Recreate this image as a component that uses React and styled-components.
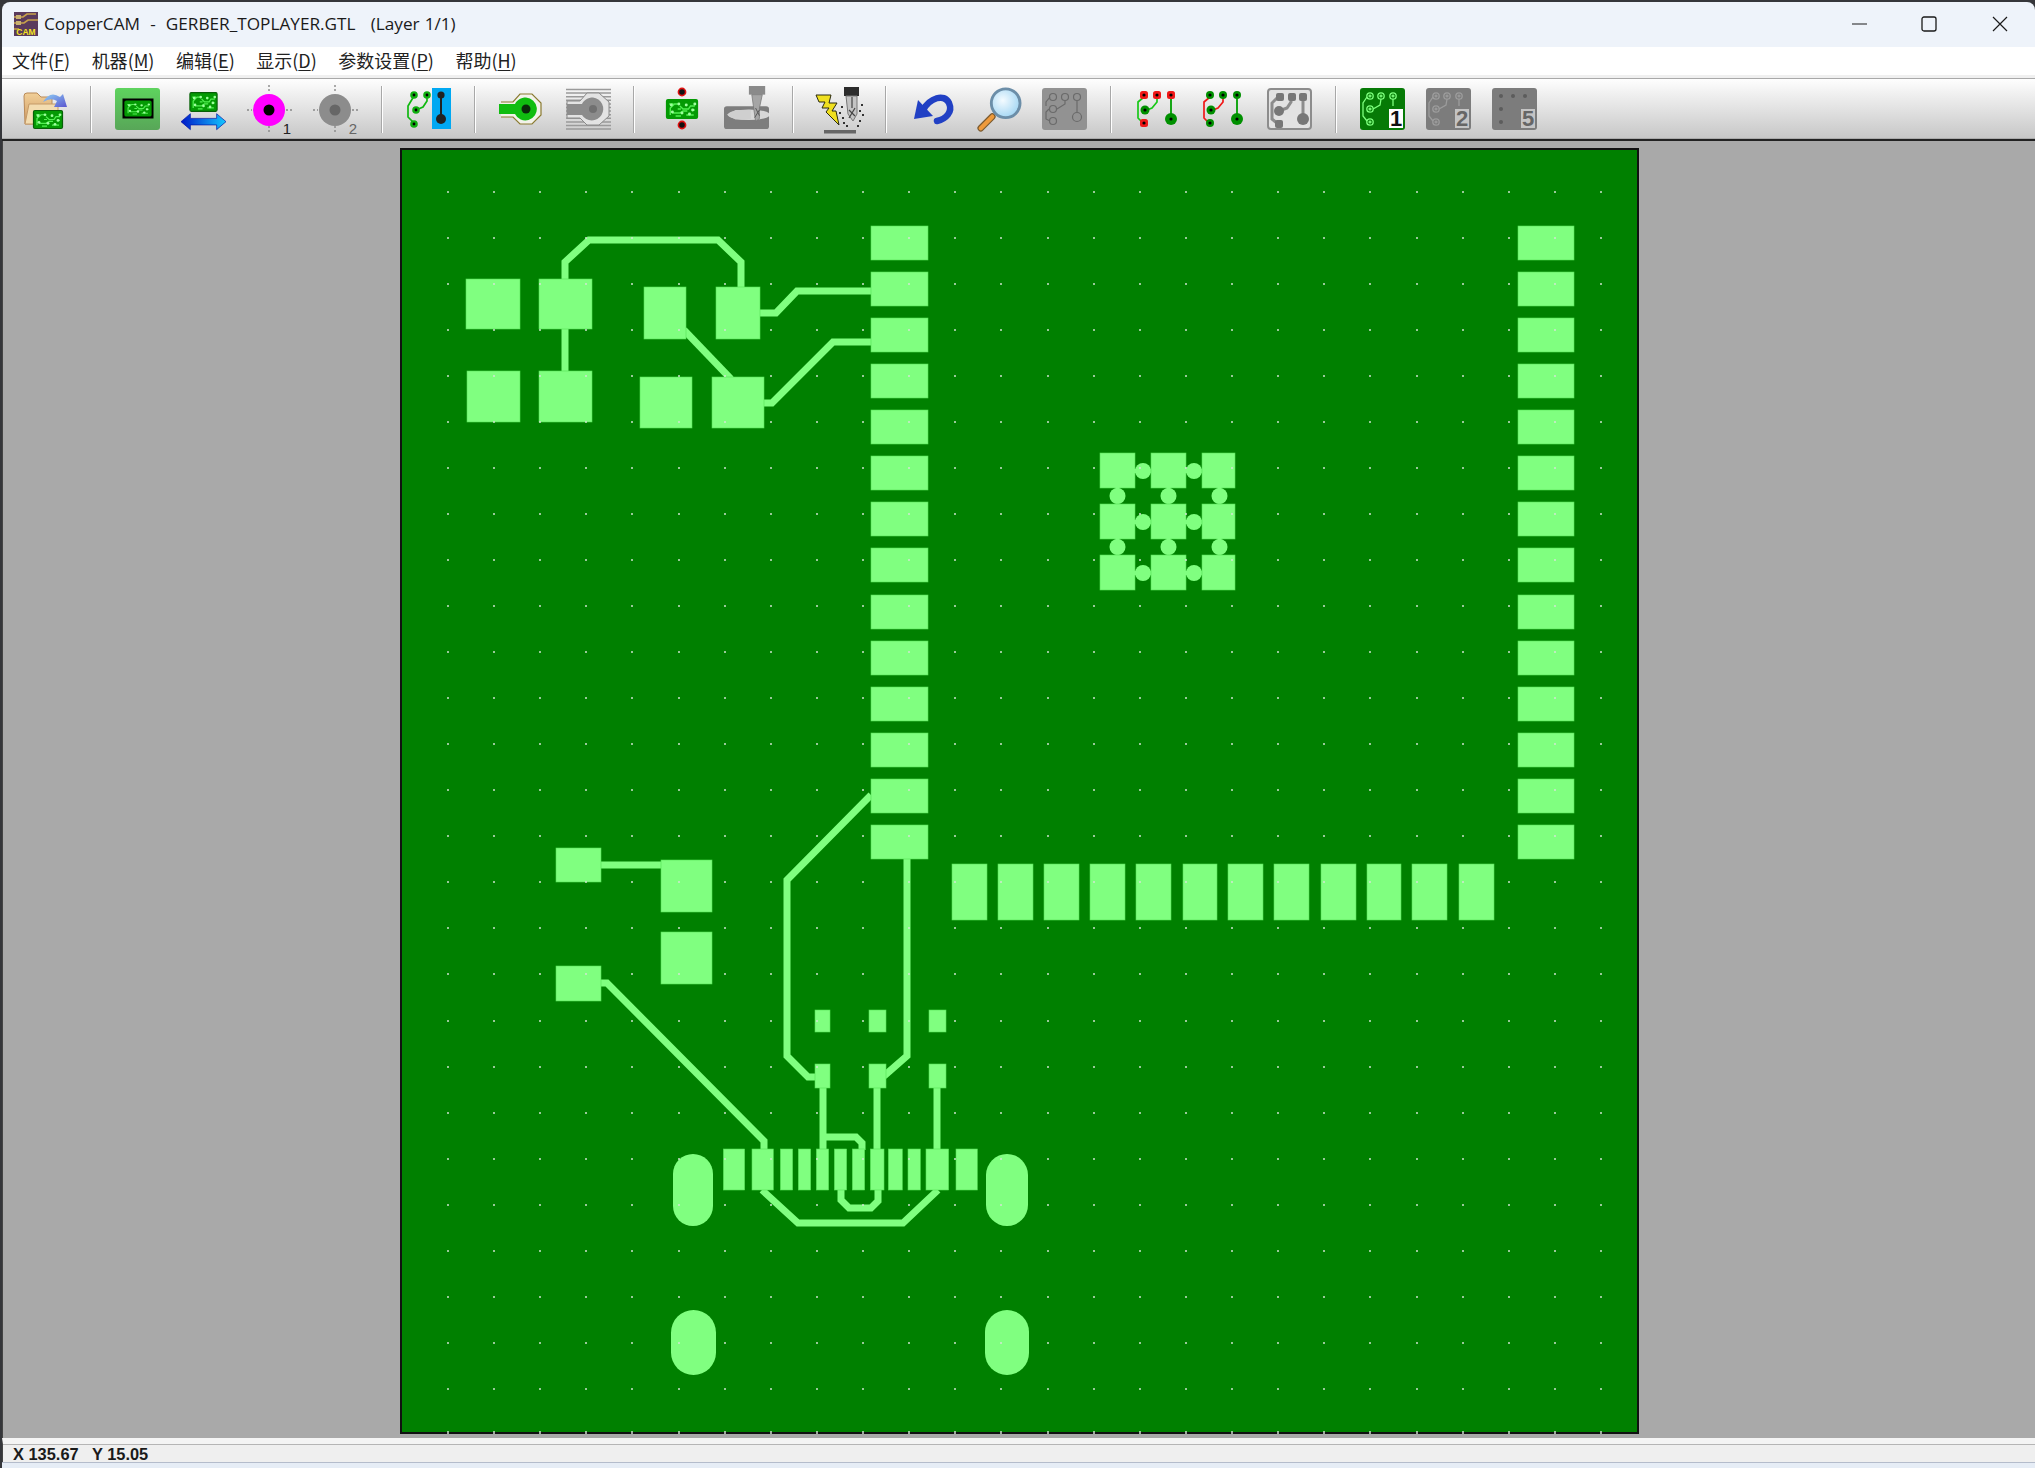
import React from 'react';
import styled, { createGlobalStyle } from 'styled-components';

const GlobalStyle = createGlobalStyle`
    html, body, #root {
        margin: 0;
        height: 100%;
        overflow: hidden;
        background: #35363a;
    }
`;

const Window = styled.div`
    height: 100%;
    box-sizing: border-box;
    padding: 2px 0 0 2px;
    display: flex;
    flex-direction: column;
`;
const TitleBar = styled.div`
    flex: 0 0 45px;
    box-sizing: border-box;
    display: flex;
    align-items: center;
    background: #eef3fa;
    border-radius: 8px 8px 0 0;
    padding: 0 0 2px 12px;
    font-family: "Open Sans", sans-serif;
    font-size: 17.2px;
    word-spacing: 0.6px;
    color: #1a1a1a;
`;
const TitleText = styled.span`
    margin-left: 6px;
    white-space: pre;
    flex: 1;
`;
const WinButton = styled.div`
    width: 24px;
    height: 24px;
    margin-right: ${(p) => p.$gap}px;
    display: flex;
    align-items: center;
    justify-content: center;
`;
const MenuBar = styled.div`
    flex: 0 0 31px;
    box-sizing: border-box;
    display: flex;
    gap: 21.5px;
    align-items: center;
    padding: 0 0 3px 10px;
    background: #fff;
    border-bottom: 3px solid #f0f0f0;
    font-family: "Noto Sans CJK SC", sans-serif;
    font-size: 18px;
    line-height: 22px;
    color: #222;
`;
const MenuItem = styled.span`
    white-space: nowrap;
    u { text-underline-offset: 2px; }
`;
const Toolbar = styled.div`
    flex: 0 0 63px;
    box-sizing: border-box;
    display: flex;
    align-items: center;
    padding-left: 20px;
    background: linear-gradient(#fefefe, #c6c6c6);
    border-top: 1px solid #a9a9a9;
    border-bottom: 2px solid #222;
    box-shadow: inset 0 -1px 0 #aaa;
`;
const ToolGroup = styled.div`
    display: flex;
    gap: 21px;
`;
const ToolSep = styled.div`
    width: 1px;
    height: 47px;
    margin: 0 23px;
    background: #a8a8a8;
    border-right: 1px solid #fff;
`;
const ToolSvg = styled.svg`
    display: block;
    width: 45px;
    height: 42px;
    overflow: visible;
`;
const Canvas = styled.div`
    flex: 1;
    min-height: 0;
    display: flex;
    justify-content: center;
    align-items: flex-start;
    padding-top: 7px;
    background: #a9a9a9;
    border-left: 1px solid #444;
`;
const BoardSvg = styled.svg`
    display: block;
    width: 1239px;
    height: 1286px;
`;
const StatusBar = styled.div`
    flex: 0 0 24px;
    box-sizing: border-box;
    display: flex;
    align-items: flex-end;
    padding-left: 10px;
    background: #efefef;
    border-top: 6px solid #f4f4f4;
    border-left: 1px solid #444;
    box-shadow: inset 0 1px 0 #b5b5b5;
    font-family: "Liberation Sans", sans-serif;
    font-weight: 700;
    font-size: 16.4px;
    line-height: 16px;
    color: #1a1a1a;
    white-space: pre;
`;
const BottomEdge = styled.div`
    flex: 0 0 6px;
    background: #e6edf6;
    border-top: 1px solid #b4bccb;
    box-sizing: border-box;
`;

/* ---------- toolbar icons ---------- */

const PcbArt = ({ x, y, w, h, border = '#075f07' }) => {
    const sx = w / 30;
    const sy = h / 20;
    return (
        <g transform={`translate(${x} ${y}) scale(${sx} ${sy})`}>
            <rect x="0.5" y="0.5" width="29" height="19" rx="1.5" fill="#049a04" stroke={border} strokeWidth="1.2" />
            <path d="M4 16 V9 L8 5 H11 M3 5 H7 M13 7 L16 10 H21 L23 7 H27 M6 14 H13 L16 12 H20 M19 16 H26 M11 10 H14 M24 11 H27 M9 17 H14" fill="none" stroke="#52f052" strokeWidth="1.3" />
            {[[12, 5], [19, 6], [25, 11], [6, 13], [22, 15], [15, 14], [5, 6], [27, 5]].map(([cx, cy]) => (
                <circle key={cx + '' + cy} cx={cx} cy={cy} r="1.4" fill="#9dff9d" />
            ))}
        </g>
    );
};

const OpenIcon = () => (
    <ToolSvg viewBox="0 0 45 42">
        <defs>
            <linearGradient id="folderG" x1="0" y1="0" x2="0" y2="1">
                <stop offset="0" stopColor="#f1cf98" />
                <stop offset="1" stopColor="#cf9a62" />
            </linearGradient>
            <linearGradient id="openArrow" x1="0" y1="0" x2="1" y2="1">
                <stop offset="0" stopColor="#8fd0f5" />
                <stop offset="1" stopColor="#5a56d0" />
            </linearGradient>
        </defs>
        <path d="M2 8 Q2 5 5 5 H15 L19 9 H30 V36 H3 Z" fill="url(#folderG)" stroke="#b98a58" />
        <path d="M7 16 H36 V36 H3 Z" fill="#f3dcb0" stroke="#c59a68" />
        <path d="M21 14 Q28 2 38 9 L41 6 L45 19 L32 19 L35 13 Q29 9 21 14 Z" fill="url(#openArrow)" />
        <PcbArt x={11} y={22} w={30} h={19} />
    </ToolSvg>
);

const ActiveBoardIcon = () => (
    <ToolSvg viewBox="0 0 45 42">
        <defs>
            <linearGradient id="activeG" x1="0" y1="0" x2="0" y2="1">
                <stop offset="0" stopColor="#5ed35e" />
                <stop offset="1" stopColor="#58a658" />
            </linearGradient>
        </defs>
        <rect x="0" y="0" width="45" height="42" rx="3" fill="url(#activeG)" />
        <rect x="7.5" y="10.5" width="31" height="20" fill="#000" />
        <PcbArt x={9.5} y={12.5} w={27} h={16} border="#049a04" />
    </ToolSvg>
);

const MirrorIcon = () => (
    <ToolSvg viewBox="0 0 48 42">
        <defs>
            <linearGradient id="mirrorG" x1="0" y1="0" x2="1" y2="0">
                <stop offset="0" stopColor="#0018c8" />
                <stop offset="1" stopColor="#14c8ff" />
            </linearGradient>
        </defs>
        <PcbArt x={9} y={3} w={30} h={21} />
        <path d="M0 34.5 L10 26 V31 H38 V26 L48 34.5 L38 43 V38 H10 V43 Z" fill="url(#mirrorG)" stroke="#0010a0" strokeWidth="0.7" />
    </ToolSvg>
);

const DrillDot = ({ fill, hole, label, labelFill }) => (
    <ToolSvg viewBox="0 0 45 42">
        <g stroke="#888" strokeWidth="1.4" strokeDasharray="2 2">
            <path d="M22 -3 V4 M22 38 V44 M0 22 H5 M39 22 H45" />
        </g>
        <circle cx="22" cy="22" r="16" fill={fill} />
        <circle cx="22" cy="22" r="5.5" fill={hole} />
        <text x="40" y="46" fontFamily="Liberation Sans, sans-serif" fontSize="15" fill={labelFill} textAnchor="middle">{label}</text>
    </ToolSvg>
);

const Nets = ({ node = '#00a000', trace = '#16c816', side = '#00a000', ends = null, big = '#00a000', hole = '#000', left = null }) => (
    <g fill="none">
        <path d="M9 9 L3 14 V30 L8 35 M12 22 L17 20 L22 14 V9" stroke={left || trace} strokeWidth="1.7" />
        <path d="M36 9 V30" stroke={side} strokeWidth="1.8" />
        {[[9, 7], [22, 7], [36, 7], [9, 35]].map(([x, y]) => (
            ends
                ? <rect key={x + '' + y} x={x - 4} y={y - 4} width="8" height="8" rx="2.5" fill={ends} />
                : <circle key={x + '' + y} cx={x} cy={y} r="4" fill={node} />
        ))}
        <circle cx="10" cy="22" r="4.5" fill={node} />
        <circle cx="36" cy="31" r="6" fill={big} />
        {[[9, 7], [22, 7], [36, 7], [9, 35], [10, 22], [36, 31]].map(([x, y]) => (
            <circle key={'h' + x + y} cx={x} cy={y} r="1.6" fill={hole} />
        ))}
    </g>
);

const TraceViaIcon = () => (
    <ToolSvg viewBox="0 0 45 42">
        <rect x="26" y="0" width="19" height="41" fill="#00a8f2" />
        <path d="M35 7 V31" stroke="#222" strokeWidth="2" />
        <circle cx="35" cy="7" r="3.6" fill="#222" />
        <circle cx="35" cy="31" r="5" fill="#222" />
        <g fill="none" stroke="#10b810" strokeWidth="1.7">
            <path d="M8 35 L2 29 V18 L8 8 M10 22 L17 19 L21 13 V8" />
        </g>
        {[[8, 7], [21, 7], [10, 22], [8, 36]].map(([x, y]) => (
            <g key={x + '' + y}>
                <circle cx={x} cy={y} r="3.8" fill="#10b010" />
                <circle cx={x} cy={y} r="1.4" fill="#000" />
            </g>
        ))}
    </ToolSvg>
);

const PadIcon = () => (
    <ToolSvg viewBox="0 0 45 42">
        <path d="M2 14 H14 L21 6 H33 L42 15 V27 L33 36 H21 L14 29 H2" fill="#f2f2ea" stroke="#8a7a30" strokeWidth="1.2" />
        <path d="M0 16 H16 C18 12 22 9.5 27 9.5 A11.5 11.5 0 1 1 16 26 H0 Z" fill="#10bd10" />
        <circle cx="27" cy="21" r="4.5" fill="#0a2a0a" />
    </ToolSvg>
);

const HatchIcon = () => (
    <ToolSvg viewBox="0 0 45 42">
        <g stroke="#9a9a9a" strokeWidth="1.5">
            {Array.from({ length: 12 }, (_, i) => (
                <path key={i} d={`M1 ${1.5 + i * 3.6} H46`} />
            ))}
        </g>
        <path d="M2 13 H15 L22 5 H34 L44 14 V28 L34 37 H22 L15 30 H2 Z" fill="#e3e3e3" stroke="#8a8a8a" />
        <path d="M2 16 H17 C19 12 23 9.5 28 9.5 A11.5 11.5 0 1 1 17 27 H2 Z" fill="#8c8c8c" />
        <circle cx="28" cy="21" r="4" fill="#707070" />
    </ToolSvg>
);

const AlignIcon = () => (
    <ToolSvg viewBox="0 0 45 42">
        <PcbArt x={8} y={11} w={32} h={20} border="#049a04" />
        <circle cx="24" cy="4" r="3.6" fill="#111" stroke="#e01010" strokeWidth="1.6" />
        <circle cx="24" cy="37" r="3.6" fill="#111" stroke="#e01010" strokeWidth="1.6" />
    </ToolSvg>
);

const MillIcon = () => (
    <ToolSvg viewBox="0 0 47 42">
        <rect x="0" y="18" width="47" height="24" rx="3" fill="#7d7d7d" />
        <ellipse cx="26" cy="27" rx="22" ry="5.5" fill="#e8e8e8" opacity="0.85" />
        <path d="M3 27 L12 22 H28 V32 H12 Z" fill="#cfcfcf" />
        <rect x="26" y="-3" width="17" height="9" fill="#8a8a8a" />
        <path d="M29 6 H40 L37 20 V31 L33 34 L31 20 Z" fill="#a5a5a5" stroke="#777" strokeWidth="0.8" />
        <path d="M33 20 L37 28 M37 22 L32 30" stroke="#555" strokeWidth="1" />
    </ToolSvg>
);

const SparkIcon = () => (
    <ToolSvg viewBox="0 0 45 42">
        <path d="M-1 7 H14 L12 15 H20 L15 23 H19 L22 37 L9 24 L12 20 H5 L8 14 H2 Z" fill="#f0e020" stroke="#2a2a10" strokeWidth="1" />
        <rect x="27" y="-1" width="15" height="9" fill="#2c2c2c" />
        <path d="M29 8 H40 V26 L36 33 L31 26 Z" fill="#c4c4c4" stroke="#777" strokeWidth="1" />
        <path d="M32 22 L38 28 M38 20 L32 30 M35 9 V20" stroke="#444" strokeWidth="1.2" />
        <rect x="7" y="42" width="32" height="3.5" fill="#666" />
        <g fill="#333">
            {[[24, 18], [22, 24], [25, 29], [26, 34], [44, 16], [42, 22], [45, 26], [42, 32], [40, 37], [29, 37]].map(([x, y]) => (
                <rect key={x + '' + y} x={x} y={y} width="2" height="2" />
            ))}
        </g>
    </ToolSvg>
);

const UndoIcon = () => (
    <ToolSvg viewBox="0 0 45 42">
        <path d="M13 22 C20 10 34 5 39 15 C43 24 36 31 27 33" fill="none" stroke="#2140c4" strokeWidth="6.5" strokeLinecap="round" />
        <path d="M4 31 L8 12 L23 28 Z" fill="#2140c4" />
    </ToolSvg>
);

const ZoomIcon = () => (
    <ToolSvg viewBox="0 0 47 42">
        <defs>
            <radialGradient id="lensG" cx="0.4" cy="0.4" r="0.7">
                <stop offset="0" stopColor="#f4fbff" />
                <stop offset="1" stopColor="#9ad2f2" />
            </radialGradient>
        </defs>
        <path d="M17 29 L5 41" stroke="#7a5a30" strokeWidth="7" strokeLinecap="round" />
        <path d="M17 29 L5 41" stroke="#ee9a3c" strokeWidth="4.5" strokeLinecap="round" />
        <circle cx="31" cy="15" r="15" fill="url(#lensG)" stroke="#6c8ea8" strokeWidth="3" />
    </ToolSvg>
);

const DisabledBoardIcon = () => (
    <ToolSvg viewBox="0 0 45 42">
        <rect x="0" y="0" width="45" height="42" rx="3" fill="#929292" />
        <g fill="none" stroke="#6a6a6a" strokeWidth="1.2">
            <circle cx="11" cy="9" r="3.5" />
            <circle cx="23" cy="9" r="3.5" />
            <circle cx="35" cy="9" r="3.5" />
            <circle cx="11" cy="21" r="3.5" />
            <circle cx="11" cy="33" r="3.5" />
            <circle cx="35" cy="29" r="4.5" />
            <path d="M35 13 V24 M15 21 L23 16 V13 M7 21 L4 24 V31 L8 33 M8 9 L4 14 V18" />
        </g>
    </ToolSvg>
);

const RedEndsIcon = () => (
    <ToolSvg viewBox="0 0 45 42">
        <Nets ends="#f01818" trace="#18c818" node="#009000" big="#009000" />
    </ToolSvg>
);

const RedTraceIcon = () => (
    <ToolSvg viewBox="0 0 45 42">
        <Nets left="#f01818" trace="#f01818" node="#009000" big="#009000" />
    </ToolSvg>
);

const GrayNetsIcon = () => (
    <ToolSvg viewBox="0 0 45 42">
        <rect x="1" y="1" width="43" height="40" rx="3" fill="#e2e2e2" stroke="#8c8c8c" strokeWidth="2" />
        <g transform="translate(2 1)">
            <path d="M9 35 L3 30 V14 L9 8 M10 22 L18 19 L22 13 V9" fill="none" stroke="#8c8c8c" strokeWidth="3" />
            <path d="M34 9 V30" stroke="#8c8c8c" strokeWidth="3" />
            <rect x="7" y="4" width="8" height="8" rx="2" fill="#777" />
            <rect x="19" y="4" width="8" height="8" rx="2" fill="#777" />
            <rect x="30" y="4" width="8" height="8" rx="2" fill="#777" />
            <circle cx="10" cy="22" r="5" fill="#777" />
            <rect x="6" y="31" width="8" height="8" rx="2" fill="#777" />
            <circle cx="34" cy="30" r="6" fill="#777" />
        </g>
    </ToolSvg>
);

const LayerIcon = ({ bg, line, digit, digitBg, digitFill, dots }) => (
    <ToolSvg viewBox="0 0 45 42">
        <rect x="0" y="0" width="45" height="42" rx="3" fill={bg} />
        {dots ? (
            <g fill="#5c5c5c">
                {[[9, 8], [21, 8], [33, 8], [9, 21], [9, 34]].map(([x, y]) => (
                    <circle key={x + '' + y} cx={x} cy={y} r="2" />
                ))}
            </g>
        ) : (
            <g fill="none" stroke={line} strokeWidth="1.3">
                {[[10, 8], [21, 8], [33, 8], [10, 21], [10, 34]].map(([x, y]) => (
                    <g key={x + '' + y}>
                        <circle cx={x} cy={y} r="3.2" />
                        <path d={`M${x - 1.5} ${y} H${x + 1.5} M${x} ${y - 1.5} V${y + 1.5}`} />
                    </g>
                ))}
                <path d="M33 11 V18 M13 21 L20 17 L21 11 M7 9 L3 15 V28 L7 33" />
            </g>
        )}
        <rect x="29" y="21" width="14" height="19" fill={digitBg} />
        <text x="36" y="38" fontFamily="Liberation Sans, sans-serif" fontWeight="700" fontSize="22" fill={digitFill} textAnchor="middle">{digit}</text>
    </ToolSvg>
);

const AppLogo = () => (
    <svg width="24" height="24" viewBox="0 0 24 24">
        <rect width="24" height="24" fill="#5a3a5c" />
        <path d="M0 5 H9 L13 2 H22 M0 11 H10 L14 8 H24 M0 17 H5" fill="none" stroke="#c9a24a" strokeWidth="1.6" />
        <rect x="2" y="3" width="5" height="4" fill="#c9b070" />
        <rect x="2" y="9" width="5" height="4" fill="#c9b070" />
        <text x="12" y="23" fontFamily="Liberation Sans, sans-serif" fontWeight="700" fontSize="8.5" fill="#f5e520" textAnchor="middle">CAM</text>
    </svg>
);

/* ---------- board ---------- */

const TOP = 225.6;
const PITCH = 46.12;
const rowPads = Array.from({ length: 14 }, (_, i) => Math.round(TOP + PITCH * i));

const pads = [
    [466, 279, 520, 329], [539, 279, 592, 329],
    [467, 371, 520, 422], [539, 371, 592, 422],
    [644, 287, 686, 339], [716, 287, 760, 339],
    [640, 377, 692, 428], [712, 377, 764, 428],
    [556, 848, 601, 882], [661, 860, 712, 912],
    [661, 932, 712, 984], [556, 966, 601, 1001],
    [815, 1010, 830, 1032], [869, 1010, 886, 1032], [929, 1010, 946, 1032],
    [815, 1064, 830, 1088], [869, 1064, 886, 1088], [929, 1064, 946, 1088],
    ...rowPads.map((y) => [871, y, 928, y + 34]),
    ...rowPads.map((y) => [1518, y, 1574, y + 34]),
    ...[952, 998, 1044, 1090, 1136, 1183, 1228, 1274, 1321, 1367, 1412, 1459].map((x, i) => (
        [x, 864, x + (i === 5 || i === 9 ? 34 : 35), 920]
    )),
    ...[[190, 254], [276, 340], [361, 398], [415, 452], [469, 506], [523, 560], [577, 614], [631, 672], [685, 727], [744, 781], [798, 866], [888, 952]].map(([a, b]) => (
        [660 + a / 3, 1149, 660 + b / 3, 1190]
    )),
];

const traces = [
    '565,287 565,262 589,240 718,240 741,262 741,287',
    '565,329 565,371',
    '760,313 776,313 797,291 871,291',
    '684,330 731,379',
    '764,403 772,403 833,342 871,342',
    '601,865 661,865',
    '601,983 607,983 764,1141 764,1150',
    '871,795 787,880 787,1056 808,1077 815,1077',
    '907,858 907,1056 884,1076',
    '823,1088 823,1150',
    '877,1088 877,1150',
    '937,1088 937,1150',
    '823,1137 856,1137 862,1143 862,1150',
    '762,1190 798,1223 903,1223 938,1190',
    '841,1190 841,1200 849,1208 871,1208 878,1201 878,1190',
];

const clusterX = [1100, 1151, 1202];
const clusterY = [453, 504, 555];

const ovals = [
    [673, 1154, 40, 72], [986, 1154, 42, 72],
    [671, 1310, 45, 65], [985, 1310, 44, 65],
];

const dotX = Array.from({ length: 26 }, (_, i) => Math.round(447 + 46.12 * i));
const dotY = Array.from({ length: 27 }, (_, i) => Math.round(190.6 + 46.05 * i));

const PAD = '#80ff80';

function Board() {
    return (
        <BoardSvg viewBox="400 148 1239 1286">
            <rect x="401" y="149" width="1237" height="1284" fill="#008000" stroke="#111" strokeWidth="2" />
            {traces.map((points) => (
                <polyline key={points} points={points} fill="none" stroke={PAD} strokeWidth="7" />
            ))}
            {pads.map(([x1, y1, x2, y2]) => (
                <rect key={`${x1}-${y1}`} x={x1} y={y1} width={x2 - x1} height={y2 - y1} fill={PAD} stroke="#55e055" strokeWidth="0.6" />
            ))}
            {clusterY.map((y) => clusterX.map((x, col) => (
                <g key={`${x}-${y}`}>
                    <rect x={x} y={y} width={col === 2 ? 33 : 35} height="35" fill={PAD} stroke="#55e055" strokeWidth="0.6" />
                    {col < 2 && <circle cx={x + 43} cy={y + 18} r="8" fill={PAD} />}
                    {col < 2 && <rect x={x + 34} y={y + 16} width="18" height="4" fill={PAD} />}
                    {y < 555 && <circle cx={x + 17.5} cy={y + 43} r="8" fill={PAD} />}
                    {y < 555 && <rect x={x + 15.5} y={y + 34} width="4" height="18" fill={PAD} />}
                </g>
            )))}
            {ovals.map(([x, y, w, h]) => (
                <rect key={`${x}-${y}`} x={x} y={y} width={w} height={h} rx={w / 2} ry={w / 2} fill={PAD} />
            ))}
            <g fill="#d4e4d4" fillOpacity="0.72" shapeRendering="crispEdges">
                {dotY.map((y) => dotX.map((x) => (
                    <rect key={`${x}-${y}`} x={x} y={y} width="2" height="2" />
                )))}
                {dotX.map((x) => (
                    <rect key={x} x={x} y="1431" width="2" height="3" />
                ))}
            </g>
        </BoardSvg>
    );
}

const menus = [
    ['文件', 'F'], ['机器', 'M'], ['编辑', 'E'], ['显示', 'D'], ['参数设置', 'P'], ['帮助', 'H'],
];

const toolGroups = [
    [<OpenIcon />],
    [<ActiveBoardIcon />, <MirrorIcon />,
        <DrillDot fill="#ff00ff" hole="#000" label="1" labelFill="#222" />,
        <DrillDot fill="#8c8c8c" hole="#666" label="2" labelFill="#666" />],
    [<TraceViaIcon />],
    [<PadIcon />, <HatchIcon />],
    [<AlignIcon />, <MillIcon />],
    [<SparkIcon />],
    [<UndoIcon />, <ZoomIcon />, <DisabledBoardIcon />],
    [<RedEndsIcon />, <RedTraceIcon />, <GrayNetsIcon />],
    [<LayerIcon bg="#067a06" line="#7dff7d" digit="1" digitBg="#fff" digitFill="#111" />,
        <LayerIcon bg="#7c7c7c" line="#9c9c9c" digit="2" digitBg="#c4c4c4" digitFill="#666" />,
        <LayerIcon bg="#7c7c7c" dots digit="5" digitBg="#c4c4c4" digitFill="#666" />],
];

export default function App() {
    return (
        <>
            <GlobalStyle />
            <Window>
                <TitleBar>
                    <AppLogo />
                    <TitleText>{'CopperCAM  -  GERBER_TOPLAYER.GTL   (Layer 1/1)'}</TitleText>
                    <WinButton $gap={45}>
                        <svg width="16" height="16" viewBox="0 0 16 16"><path d="M0 8 H15" stroke="#1a1a1a" strokeWidth="1" /></svg>
                    </WinButton>
                    <WinButton $gap={47}>
                        <svg width="16" height="16" viewBox="0 0 16 16"><rect x="1" y="1" width="14" height="14" rx="2" fill="none" stroke="#1a1a1a" strokeWidth="1.3" /></svg>
                    </WinButton>
                    <WinButton $gap={23}>
                        <svg width="16" height="16" viewBox="0 0 16 16"><path d="M1 1 L15 15 M15 1 L1 15" stroke="#1a1a1a" strokeWidth="1.2" /></svg>
                    </WinButton>
                </TitleBar>
                <MenuBar>
                    {menus.map(([label, key]) => (
                        <MenuItem key={key}>{label}(<u>{key}</u>)</MenuItem>
                    ))}
                </MenuBar>
                <Toolbar>
                    {toolGroups.map((group, g) => (
                        <React.Fragment key={g}>
                            {g > 0 && <ToolSep />}
                            <ToolGroup>
                                {group.map((icon, i) => <div key={i}>{icon}</div>)}
                            </ToolGroup>
                        </React.Fragment>
                    ))}
                </Toolbar>
                <Canvas>
                    <Board />
                </Canvas>
                <StatusBar>{'X 135.67   Y 15.05'}</StatusBar>
                <BottomEdge />
            </Window>
        </>
    );
}
